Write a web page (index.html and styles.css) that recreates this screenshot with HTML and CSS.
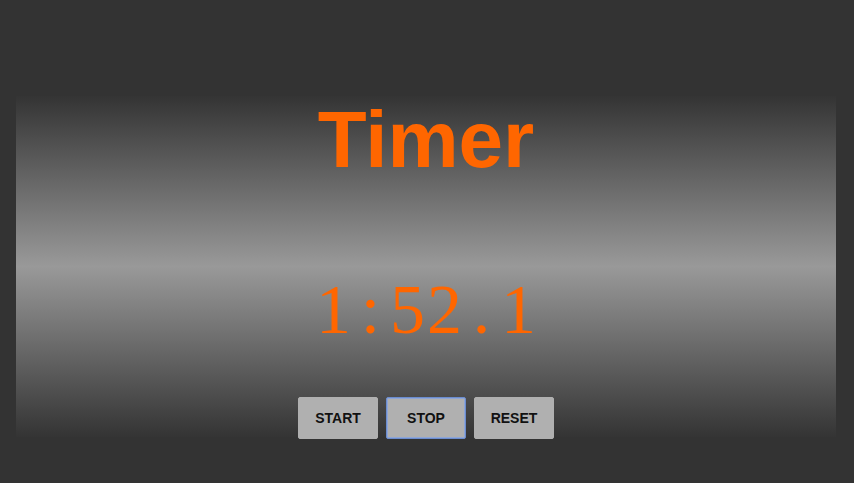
FILE: index.html
```html
<!DOCTYPE html>
<html>
<head>
<meta charset="utf-8">
<link rel="stylesheet" href="styles.css">
</head>
<body>
<div class="panel">
  <h1 class="title">Timer</h1>
  <div class="time"><span>1</span><span>:</span><span>5</span><span>2</span><span>.</span><span>1</span></div>
  <div class="controls">
    <button class="btn">START</button>
    <button class="btn focused">STOP</button>
    <button class="btn">RESET</button>
  </div>
</div>
</body>
</html>
```

FILE: styles.css
```css
html, body {
  margin: 0;
  padding: 0;
  background: #333333;
  height: 100%;
}
.panel {
  margin: 96px 18px 0 16px;
  height: 341px;
  box-sizing: border-box;
  padding-top: 4px;
  background: linear-gradient(to bottom, #343434 0%, #999999 50%, #343434 100%);
  display: flex;
  flex-direction: column;
  align-items: center;
}
.title {
  margin: 0;
  font-family: "Liberation Sans", Arial, sans-serif;
  font-weight: bold;
  font-size: 80px;
  line-height: 80px;
  color: #ff6600;
}
.time {
  margin-top: 95px;
  font-family: "Liberation Serif", "Times New Roman", serif;
  font-size: 70px;
  line-height: 70px;
  color: #ff6600;
  display: flex;
}
.time span {
  display: inline-block;
  width: 37px;
  text-align: center;
}
.controls {
  margin-top: 52px;
  display: flex;
  gap: 8px;
}
.btn {
  width: 80px;
  height: 42px;
  box-sizing: border-box;
  background: #b0b0b0;
  border: 1px solid #b0b0b0;
  border-radius: 2px;
  font-family: "Liberation Sans", Arial, sans-serif;
  font-weight: bold;
  font-size: 14px;
  color: #111111;
  padding: 0;
}
.btn.focused {
  border: 1px solid #6a8ccf;
  box-shadow: 0 0 0 1px #8fa6d6 inset;
}
```
